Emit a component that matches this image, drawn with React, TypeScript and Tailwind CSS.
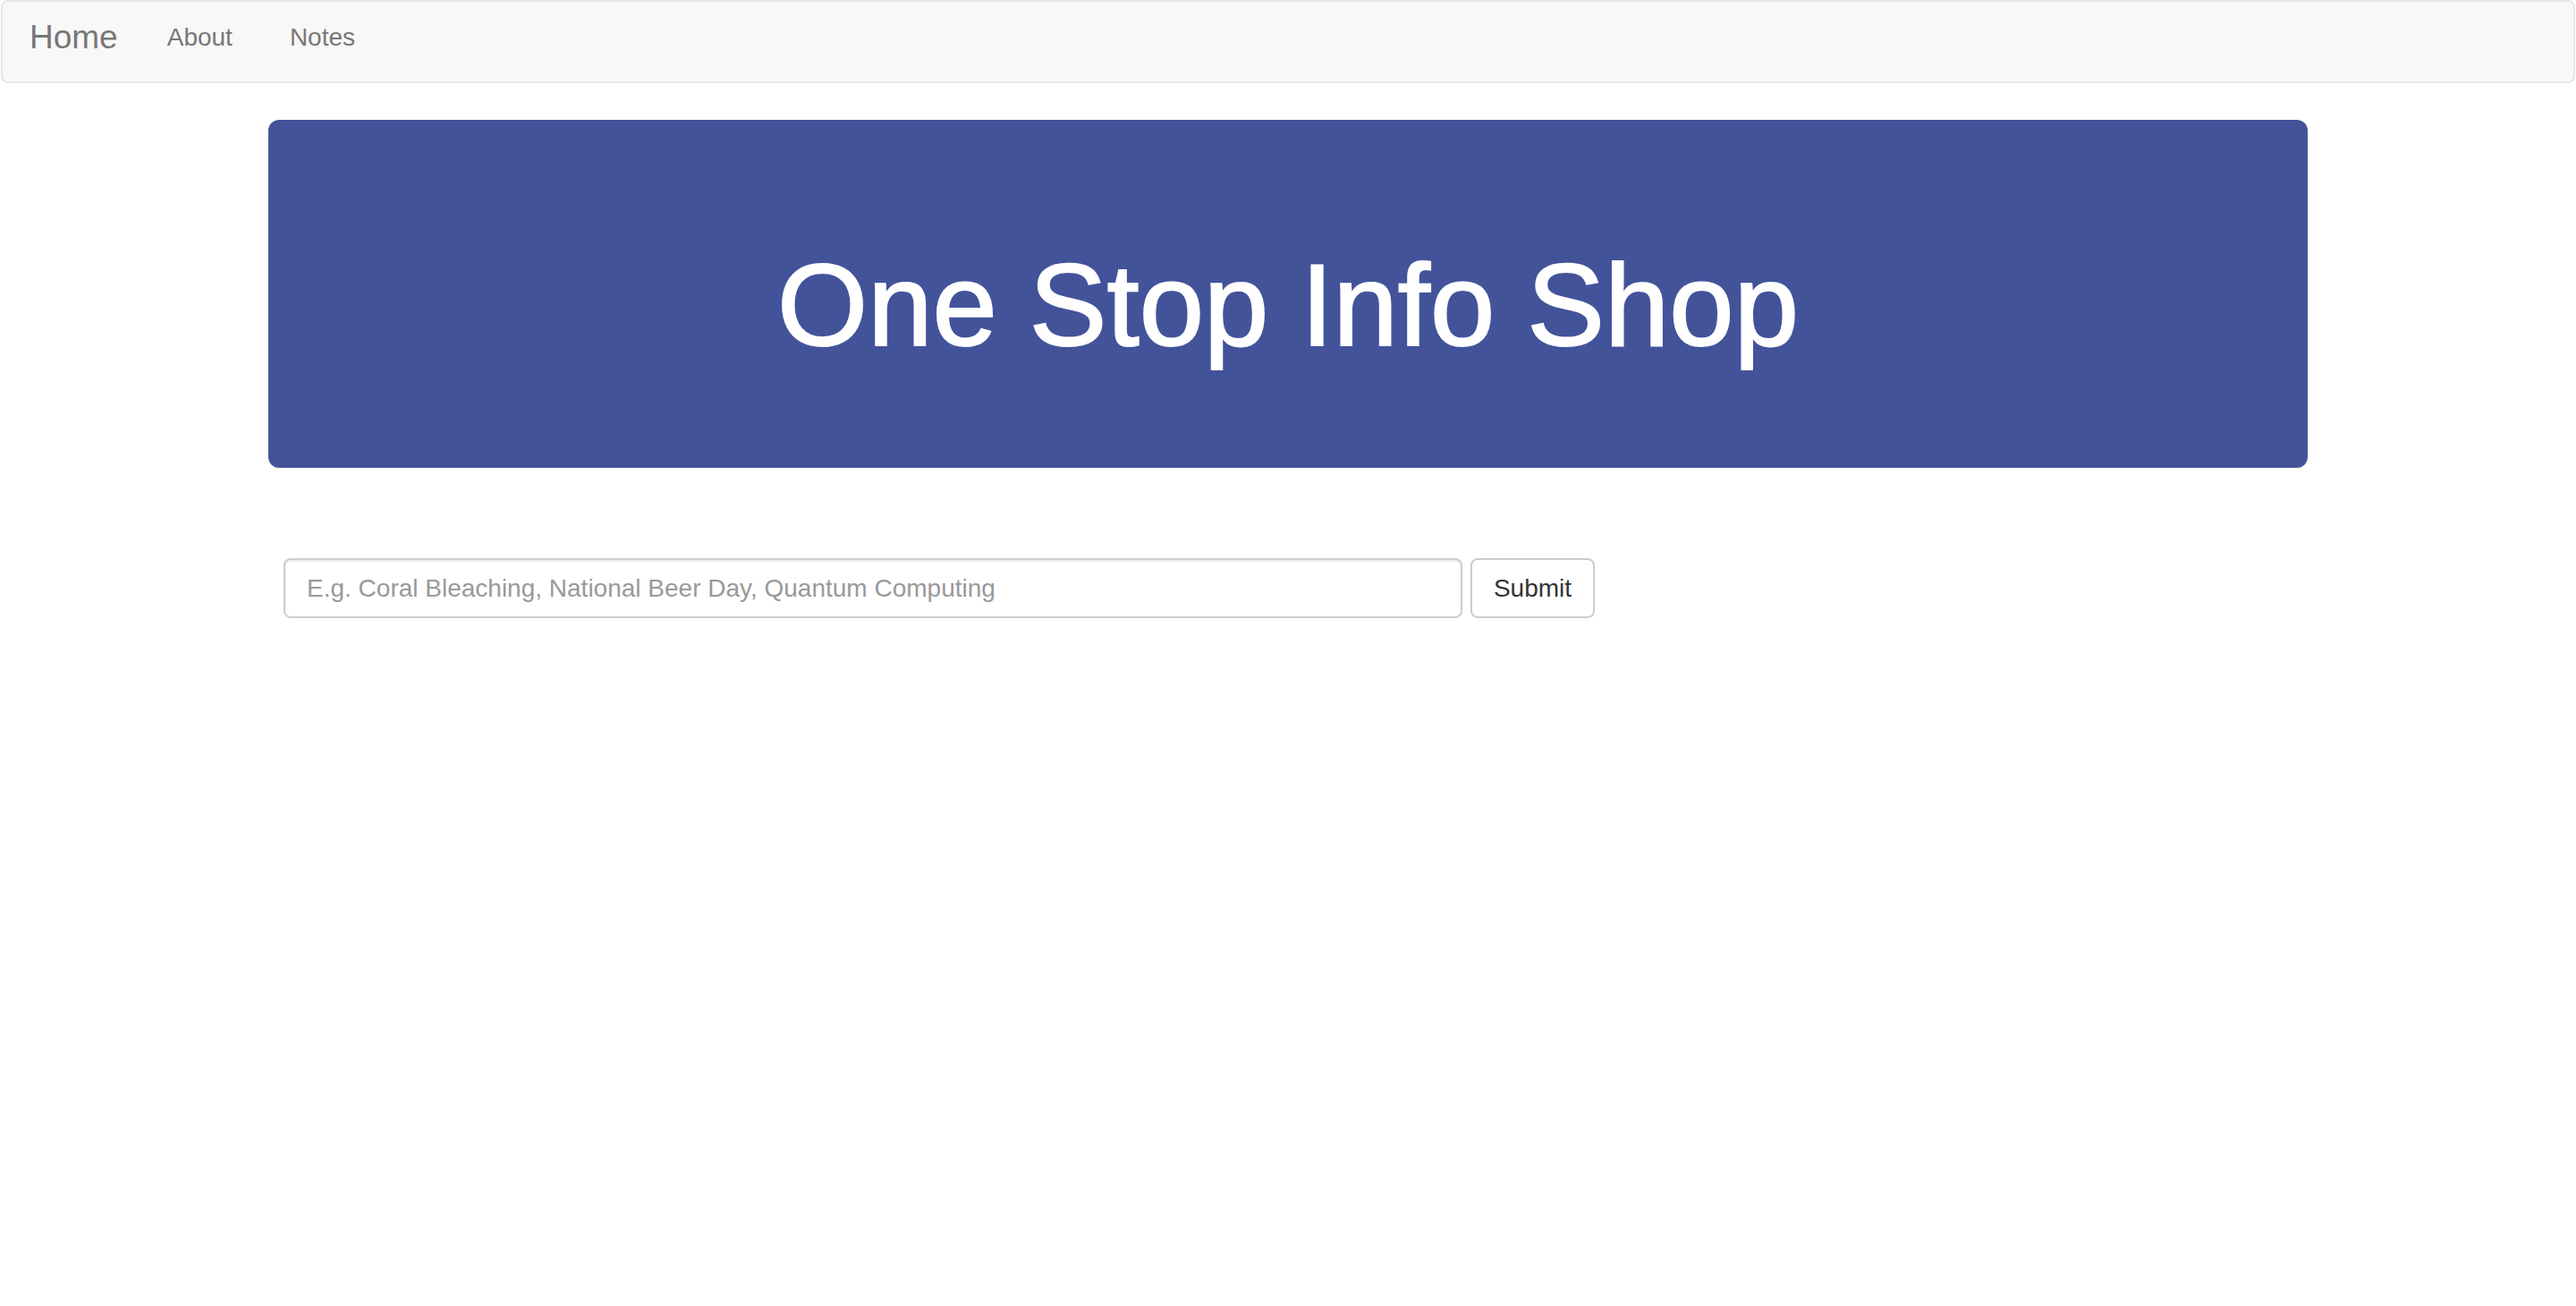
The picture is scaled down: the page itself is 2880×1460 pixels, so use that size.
import React from 'react';

const font = { fontFamily: '"Liberation Sans", Arial, Helvetica, sans-serif' };

function NavBar() {
  return (
    <nav className="mx-px flex h-[93px] items-center rounded-[8px] border-2 border-[#e7e7e7] bg-[#f8f8f8] pb-[10px]">
      <a className="ml-[30px] text-[37px] leading-none text-[#777]">Home</a>
      <a className="ml-[55px] text-[28px] leading-none text-[#777]">About</a>
      <a className="ml-[64px] text-[28px] leading-none text-[#777]">Notes</a>
    </nav>
  );
}

export default function App() {
  return (
    <div className="min-h-screen bg-white" style={font}>
      <NavBar />
      <main className="mx-auto w-[2280px]">
        <section className="mt-[41px] rounded-[12px] bg-[#43539a] pb-[110px] pt-[136px] text-center">
          <h1 className="text-[130px] font-normal leading-[143px] text-white [-webkit-text-stroke:2px_white]">
            One Stop Info Shop
          </h1>
        </section>

        <form className="ml-[17px] mt-[101px] flex gap-[9px]" onSubmit={(e) => e.preventDefault()}>
          <input
            type="text"
            placeholder="E.g. Coral Bleaching, National Beer Day, Quantum Computing"
            className="h-[67px] w-[1318px] rounded-[8px] border-2 border-[#ccc] px-[24px] text-[28px] text-[#555] shadow-[inset_0_2px_2px_rgba(0,0,0,0.075)] outline-none placeholder:text-[#999]"
          />
          <button
            type="submit"
            className="h-[67px] w-[139px] rounded-[8px] border-2 border-[#ccc] bg-white text-[28px] text-[#333]"
          >
            Submit
          </button>
        </form>
      </main>
    </div>
  );
}
